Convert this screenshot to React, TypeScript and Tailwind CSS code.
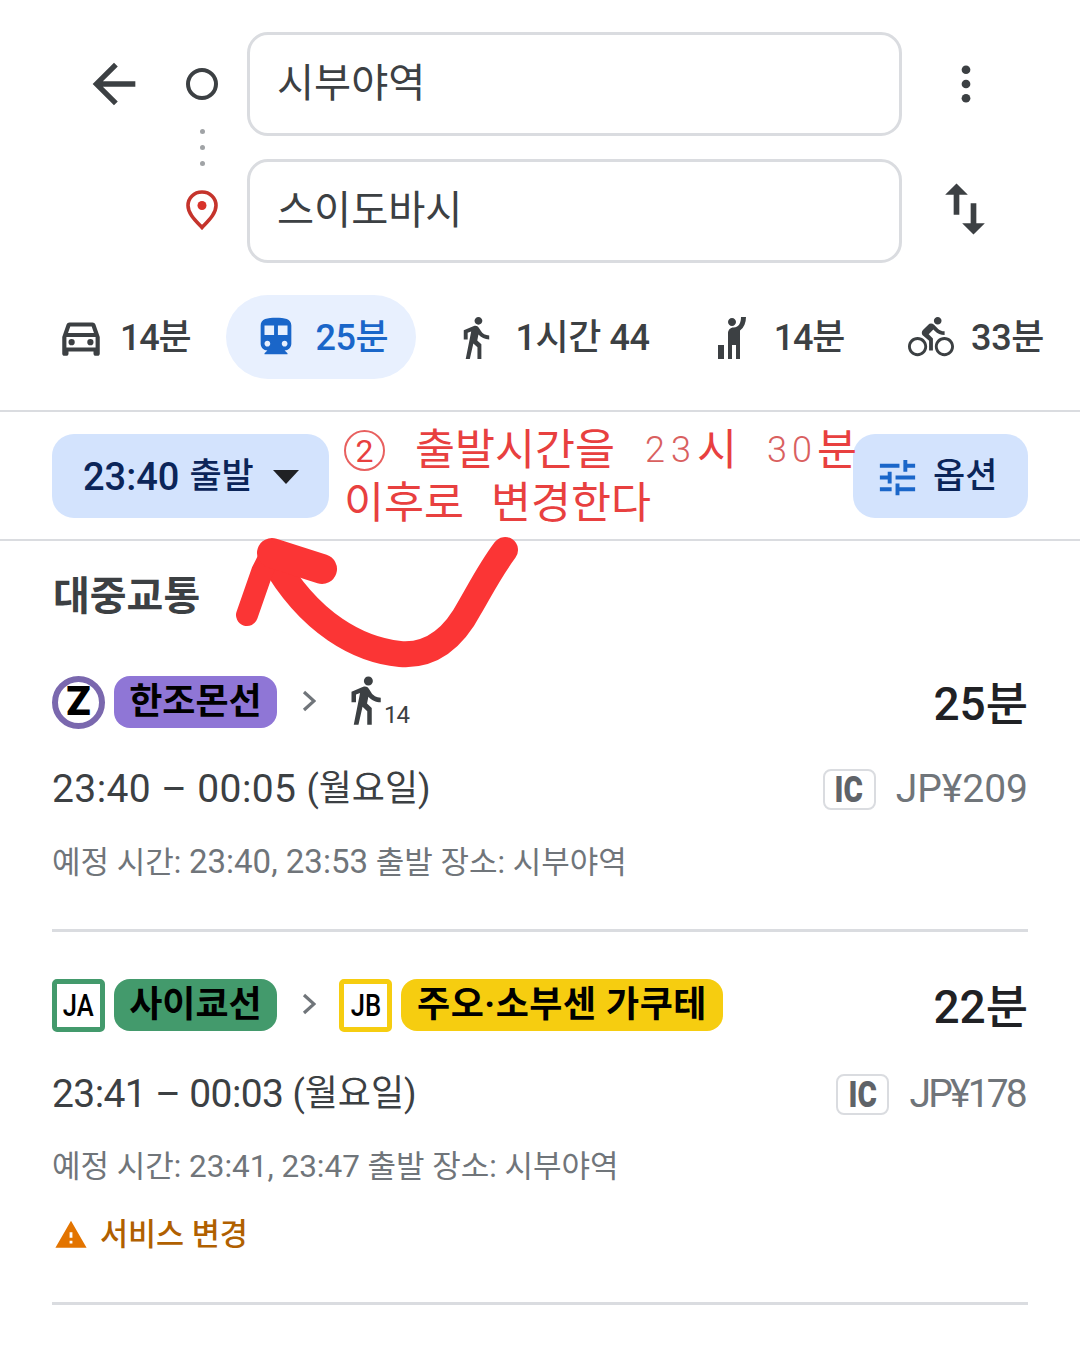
function MIcon({ d, className }: { d: string; className?: string }) {
  return (
    <svg viewBox="0 0 24 24" fill="currentColor" className={className}>
      <path d={d} />
    </svg>
  );
}

const WALK =
  "M13.5 5.5c1.1 0 2-.9 2-2s-.9-2-2-2-2 .9-2 2 .9 2 2 2zM9.8 8.9L7 23h2.1l1.8-8 2.1 2v6h2v-7.5l-2.1-2 .6-3C14.8 12 16.8 13 19 13v-2c-1.9 0-3.5-1-4.3-2.4l-1-1.6c-.4-.6-1-1-1.7-1-.3 0-.5.1-.8.1L6 8.3V13h2V9.6l1.8-.7";
const BIKE =
  "M15.5 5.5c1.1 0 2-.9 2-2s-.9-2-2-2-2 .9-2 2 .9 2 2 2zM5 12c-2.8 0-5 2.2-5 5s2.2 5 5 5 5-2.2 5-5-2.2-5-5-5zm0 8.5c-1.9 0-3.5-1.6-3.5-3.5s1.6-3.5 3.5-3.5 3.5 1.6 3.5 3.5-1.6 3.5-3.5 3.5zm5.8-10l2.4-2.4.8.8c1.3 1.3 3 2.1 5.1 2.1V9c-1.5 0-2.7-.6-3.6-1.5l-1.9-1.9c-.5-.4-1-.6-1.6-.6s-1.1.2-1.4.6L7.8 8.4c-.4.4-.6.9-.6 1.4 0 .6.2 1.1.6 1.4L11 14v5h2v-6.2l-2.2-2.3zM19 12c-2.8 0-5 2.2-5 5s2.2 5 5 5 5-2.2 5-5-2.2-5-5-5zm0 8.5c-1.9 0-3.5-1.6-3.5-3.5s1.6-3.5 3.5-3.5 3.5 1.6 3.5 3.5-1.6 3.5-3.5 3.5z";
const CAR =
  "M18.92 6.01C18.72 5.42 18.16 5 17.5 5h-11c-.66 0-1.21.42-1.42 1.01L3 12v8c0 .55.45 1 1 1h1c.55 0 1-.45 1-1v-1h12v1c0 .55.45 1 1 1h1c.55 0 1-.45 1-1v-8l-2.08-5.99zM6.85 7h10.29l1.08 3.11H5.77L6.85 7zM19 17H5v-5h14v5zM7.5 16a1.5 1.5 0 1 0 0-3 1.5 1.5 0 0 0 0 3zM16.5 16a1.5 1.5 0 1 0 0-3 1.5 1.5 0 0 0 0 3z";
const TRANSIT =
  "M12 2c-4.42 0-8 .5-8 4v9.5C4 17.43 5.57 19 7.5 19L6 20.5v.5h12v-.5L16.5 19c1.93 0 3.5-1.57 3.5-3.5V6c0-3.5-3.58-4-8-4zM7.5 17c-.83 0-1.5-.67-1.5-1.5S6.67 14 7.5 14s1.5.67 1.5 1.5S8.33 17 7.5 17zm3.5-6H6V6h5v5zm5.5 6c-.83 0-1.5-.67-1.5-1.5s.67-1.5 1.5-1.5 1.5.67 1.5 1.5-.67 1.5-1.5 1.5zm1.5-6h-5V6h5v5z";
const HAIL =
  "M12 6.5c-1.1 0-2-.9-2-2s.9-2 2-2 2 .9 2 2-.9 2-2 2zM17.5 2H19c0 2.9-1 5.2-3 6.8V23h-2v-7h-2v7h-2V10c0-1.6 1.2-2.8 2.8-2.8 2.8 0 3.7-2.6 3.7-5.2zM5 16h3v7H5z";
const TUNE =
  "M3 17v2h6v-2H3zM3 5v2h10V5H3zm10 16v-2h8v-2h-8v-2h-2v6h2zM7 9v2H3v2h4v2h2V9H7zm14 4v-2H11v2h10zm-6-4h2V7h4V5h-4V3h-2v6z";

function Chevron() {
  return (
    <svg viewBox="0 0 14 22" className="w-[14px] h-[22px] -mt-[3px] text-[#70757a]" fill="none" stroke="currentColor" strokeWidth="3.2">
      <path d="M2 2 12 11 2 20" />
    </svg>
  );
}

function LinePill({ bg, children, className }: { bg: string; children: string; className?: string }) {
  return (
    <span className={`h-[52px] pb-[1px] rounded-[16px] flex items-center justify-center text-[36px] font-bold text-black ${bg} ${className ?? ""}`}>
      {children}
    </span>
  );
}

function SquareBadge({ border, children }: { border: string; children: string }) {
  return (
    <span className={`w-[53px] h-[53px] border-[5px] rounded-[5px] bg-white flex items-center justify-center text-black ${border}`}>
      <span className="text-[32px] font-medium leading-none scale-x-[0.8]">{children}</span>
    </span>
  );
}

function Fare({ amount, tight }: { amount: string; tight?: boolean }) {
  return (
    <div className="flex items-center gap-[20px]">
      <span className="w-[53px] h-[41px] border-2 border-[#dadce0] rounded-[8px] flex items-center justify-center text-[#5f6368]">
        <span className="text-[37px] font-black leading-none scale-x-[0.8]">IC</span>
      </span>
      <span className={`text-[39px] text-[#70757a] leading-none ${tight ? "tracking-[-2.8px] pr-[3px]" : ""}`}>{amount}</span>
    </div>
  );
}

function Mode({ icon, iconClass, label, labelClass, className }: { icon: string; iconClass: string; label: string; labelClass?: string; className?: string }) {
  return (
    <div className={`flex items-center ${className ?? ""}`}>
      <MIcon d={icon} className={iconClass} />
      <span className={`pt-[2px] text-[36px] font-medium leading-none ${labelClass ?? "tracking-[-0.4px]"}`}>{label}</span>
    </div>
  );
}

export default function App() {
  return (
    <div
      className="relative w-[1080px] h-[1350px] overflow-hidden bg-white text-[#3c4043]"
      style={{ fontFamily: 'Roboto, "Noto Sans CJK KR", sans-serif' }}
    >
      {/* search boxes */}
      <div className="flex pt-[32px] pl-[90px]">
        <div className="w-[50px] pt-[20px]">
          <MIcon d="M20 11H7.83l5.59-5.59L12 4l-8 8 8 8 1.41-1.41L7.83 13H20v-2z" className="w-[64px] h-[64px] -ml-[8px] max-w-none" />
        </div>
        <div className="w-[107px] pl-[17px] flex flex-col items-center">
          <span className="mt-[36px] w-[32px] h-[32px] rounded-full border-[4px] border-[#3c4043]" />
          <span className="mt-[29px] w-[5px] h-[5px] rounded-full bg-[#a0a3a6]" />
          <span className="mt-[11px] w-[5px] h-[5px] rounded-full bg-[#a0a3a6]" />
          <span className="mt-[11px] w-[5px] h-[5px] rounded-full bg-[#a0a3a6]" />
          <svg viewBox="0 0 32 40" className="mt-[24px] w-[32px] h-[40px]">
            <path d="M16 2C8 2 2 8 2 15.5 2 24 10 31 16 37.5 22 31 30 24 30 15.5 30 8 24 2 16 2z" fill="none" stroke="#c5342c" strokeWidth="3.6" />
            <circle cx="16" cy="15.5" r="4.5" fill="#d8322a" />
          </svg>
        </div>
        <div className="w-[655px] flex flex-col gap-[23px]">
          <div className="h-[104px] rounded-[21px] border-[3px] border-[#dadce0] flex items-center pl-[27px] text-[40.3px]">시부야역</div>
          <div className="h-[104px] rounded-[21px] border-[3px] border-[#dadce0] flex items-center pl-[27px] text-[40.3px]">스이도바시</div>
        </div>
        <div className="flex-1 flex flex-col items-start pl-[59px]">
          <svg viewBox="0 0 10 40" className="mt-[33px] w-[10px] h-[38px]" fill="#3c4043">
            <circle cx="5" cy="5" r="4.6" />
            <circle cx="5" cy="20" r="4.6" />
            <circle cx="5" cy="35" r="4.6" />
          </svg>
          <MIcon d="M16 17.01V10h-2v7.01h-3L15 21l4-3.99h-3zM9 3L5 6.99h3V14h2V6.99h3L9 3z" className="mt-[72px] -ml-[30px] w-[68px] h-[68px] max-w-none" />
        </div>
      </div>

      {/* travel modes */}
      <div className="flex items-center h-[84px] mt-[32px] pl-[56px]">
        <Mode icon={CAR} iconClass="w-[50px] h-[50px] mr-[14px]" label="14분" labelClass="tracking-[-1.2px]" />
        <div className="ml-[36px] h-[84px] w-[190px] rounded-full bg-[#e8f0fe] text-[#1a66c9] flex items-center pl-[27px]">
          <MIcon d={TRANSIT} className="w-[46px] h-[46px] mr-[16px]" />
          <span className="pt-[2px] text-[36px] font-medium leading-none tracking-[-0.4px]">25분</span>
        </div>
        <Mode icon={WALK} iconClass="w-[47px] h-[47px] mr-[16px]" label="1시간 44" className="ml-[36px]" />
        <Mode icon={HAIL} iconClass="w-[48px] h-[48px] mr-[18px]" label="14분" labelClass="tracking-[-1.2px]" className="ml-[58px]" />
        <Mode icon={BIKE} iconClass="w-[46px] h-[46px] mr-[17px]" label="33분" className="ml-[64px]" />
      </div>

      {/* filter row */}
      <div className="mt-[31px] h-[131px] border-y-[2px] border-[#dadce0] px-[52px] flex items-center justify-between">
        <div className="w-[277px] h-[84px] pt-[3px] rounded-[22px] bg-[#d3e3fd] text-[#0b2559] flex items-center pl-[31px] text-[38px] font-medium">
          23:40
          <span className="ml-[10px] text-[35px]">출발</span>
          <svg viewBox="0 0 26 14" className="ml-[19px] w-[26px] h-[14px]" fill="#202124">
            <path d="M0 0h26L13 14z" />
          </svg>
        </div>
        <div className="w-[175px] h-[84px] pt-[3px] rounded-[22px] bg-[#d3e3fd] text-[#0b2559] flex items-center pl-[21px] text-[35px] font-medium">
          <MIcon d={TUNE} className="w-[47px] h-[47px] mr-[12px] text-[#1a66c9]" />
          옵션
        </div>
      </div>

      {/* routes */}
      <div className="px-[52px]">
        <h2 className="mt-[31px] text-[40px] font-bold leading-[50px] pl-[1px] text-[#3c4043]">대중교통</h2>

        <div className="mt-[54px] h-[52px] flex items-center">
          <span className="w-[53px] h-[53px] rounded-full border-[6px] border-[#7a68ae] bg-white flex items-center justify-center text-[40px] font-black text-black leading-none">Z</span>
          <LinePill bg="bg-[#8f76d6]" className="ml-[9px] w-[163px]">한조몬선</LinePill>
          <span className="ml-[25px] flex"><Chevron /></span>
          <MIcon d={WALK} className="ml-[22px] w-[54px] h-[54px] -mt-[5px] shrink-0" />
          <span className="text-[24px] mt-[26px] -ml-[8px] leading-none tracking-[-1px]">14</span>
          <span className="ml-auto mt-[4px] text-[46px] font-medium text-[#202124] leading-none">25분</span>
        </div>
        <div className="mt-[39px] flex items-center justify-between h-[44px]">
          <span className="leading-none flex items-center">
            <span className="text-[39px] tracking-[0.4px]">23:40 – 00:05</span>
            <span className="ml-[10px] text-[36px]">(월요일)</span>
          </span>
          <Fare amount="JP¥209" />
        </div>
        <p className="mt-[31px] text-[31px] leading-[40px] text-[#70757a]">
          예정 시간: <span className="text-[33px]">23:40, 23:53</span> 출발 장소: 시부야역
        </p>
        <div className="mt-[46px] h-[3px] bg-[#dadce0]" />

        <div className="mt-[47px] h-[52px] flex items-center">
          <SquareBadge border="border-[#439a6c]">JA</SquareBadge>
          <LinePill bg="bg-[#439a6c]" className="ml-[9px] w-[163px]">사이쿄선</LinePill>
          <span className="ml-[25px] flex"><Chevron /></span>
          <span className="ml-[23px] flex"><SquareBadge border="border-[#f6cd10]">JB</SquareBadge></span>
          <LinePill bg="bg-[#f6cd10]" className="ml-[9px] w-[322px] tracking-[0.5px]">주오·소부센 가쿠테</LinePill>
          <span className="ml-auto mt-[4px] text-[46px] font-medium text-[#202124] leading-none">22분</span>
        </div>
        <div className="mt-[41px] flex items-center justify-between h-[44px]">
          <span className="leading-none flex items-center">
            <span className="text-[39px] tracking-[-0.6px]">23:41 – 00:03</span>
            <span className="ml-[9px] text-[36px]">(월요일)</span>
          </span>
          <Fare amount="JP¥178" tight />
        </div>
        <p className="mt-[31px] text-[31px] leading-[40px] text-[#70757a]">
          예정 시간: <span className="text-[31.5px]">23:41, 23:47</span> 출발 장소: 시부야역
        </p>
        <div className="mt-[28px] h-[40px] flex items-center">
          <MIcon d="M1 21h22L12 2 1 21zm12-3h-2v-2h2v2zm0-4h-2v-4h2v4z" className="ml-[2px] w-[34px] h-[34px] text-[#e37400]" />
          <span className="ml-[12px] text-[30.5px] font-medium text-[#b06000]">서비스 변경</span>
        </div>
        <div className="mt-[47px] h-[3px] bg-[#dadce0]" />
      </div>

      {/* hand written note over the screenshot */}
      <div className="absolute left-[344px] top-[424px] text-[#e8403f] text-[43.5px] leading-[53px] whitespace-nowrap">
        <div className="flex items-center">
          <span className="shrink-0 w-[41px] h-[41px] rounded-full border-[2px] border-[#e8605f] flex items-center justify-center text-[32px] leading-none">2</span>
          <span className="ml-[30px] shrink-0">출발시간을</span>
          <span className="ml-[30px] shrink-0 text-[36px] font-light tracking-[6px] text-[#d9605f]">23</span>
          <span className="shrink-0">시</span>
          <span className="ml-[30px] shrink-0 text-[36px] font-light tracking-[5px] text-[#d9605f]">30</span>
          <span className="shrink-0">분</span>
        </div>
        <div className="flex">
          <span>이후로</span>
          <span className="ml-[27px]">변경한다</span>
        </div>
      </div>

      <svg viewBox="0 0 1080 1350" className="absolute inset-0 w-[1080px] h-[1350px] pointer-events-none" fill="none" stroke="#fb3535" strokeLinecap="round" strokeLinejoin="round">
        <path d="M505 550C490 570 480 590 470 607 450 645 425 656 400 654 360 650 310 625 272 558" strokeWidth="26" />
        <path d="M247 615 262 572 272 552" strokeWidth="22" />
        <path d="M272 553 322 569" strokeWidth="30" />
      </svg>
    </div>
  );
}
